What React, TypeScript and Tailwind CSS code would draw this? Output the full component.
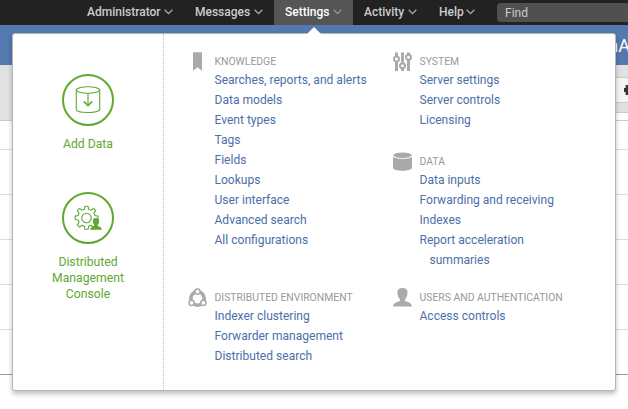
import type { ReactNode } from "react";

const navItems = [
  { label: "Administrator", width: "w-[108px]" },
  { label: "Messages", width: "w-[90px]" },
  { label: "Settings", width: "w-[79px]", active: true },
  { label: "Activity", width: "w-[75px]" },
  { label: "Help", width: "w-[58px]" },
];

function Chevron({ active }: { active?: boolean }) {
  return (
    <svg width="9" height="6" viewBox="0 0 9 6" fill="none" className={active ? "text-[#999]" : "text-[#aaa]"}>
      <path d="M0.7 0.8 4.5 4.6 8.3 0.8" stroke="currentColor" strokeWidth="1.3" />
    </svg>
  );
}

function TopBar() {
  return (
    <nav className="flex h-[25px] items-stretch bg-[#222] pl-[76px] text-[12px] font-medium text-[#ccc]">
      {navItems.map((item) => (
        <div
          key={item.label}
          className={`flex shrink-0 items-center justify-between px-[11px] pb-px ${item.width} ${
            item.active ? "bg-[#555] text-white" : ""
          }`}
        >
          <span>{item.label}</span>
          <Chevron active={item.active} />
        </div>
      ))}
      <div className="mt-[3px] ml-[11px] flex h-[19px] flex-1 items-center rounded-l-[4px] bg-[#505050] pl-2 font-normal">
        Find
      </div>
    </nav>
  );
}

function Page() {
  return (
    <main>
      <div className="flex h-10 items-center justify-end bg-[#5479af] text-[18px] whitespace-nowrap text-white">
        <span className="-mr-[2px] pt-px">nA</span>
      </div>
      <div className="flex h-14 flex-col items-end border-b border-[#ccc] bg-[#e1e1e1] pt-3">
        <div className="flex h-[27px] w-[30px] items-center justify-end overflow-hidden border-y border-[#ccc] bg-[#f5f5f5]">
          <svg width="4" height="12" viewBox="0 0 4 12">
            <path d="M0 4h1.6V1H4v10H1.6V8H0z" fill="#333" />
          </svg>
        </div>
        <div className="mt-[9px] h-2 w-[30px] border-t border-[#ccc] bg-white" />
      </div>
      <div className="h-[29px] border-b border-[#ddd]" />
      <div className="h-[45px] border-b border-[#ddd]" />
      <div className="h-[45px] border-b border-[#ddd]" />
      <div className="h-[45px] border-b border-[#ddd]" />
      <div className="h-[45px] border-b border-[#ddd]" />
      <div className="h-[45px] border-b border-[#999]" />
    </main>
  );
}

function Shortcut({ icon, children }: { icon: ReactNode; children: ReactNode }) {
  return (
    <div className="flex flex-col items-center text-center text-[12.2px] leading-4 text-[#5fa832]">
      <div className="mb-[10px] flex size-[52px] items-center justify-center rounded-full border-2 border-[#5fa832]">
        {icon}
      </div>
      {children}
    </div>
  );
}

function AddDataIcon() {
  return (
    <svg width="26" height="28" viewBox="0 0 26 28" fill="none" stroke="currentColor" strokeWidth="1.1">
      <ellipse cx="13" cy="4" rx="11.7" ry="3.3" />
      <path d="M1.3 4v19.2c0 4.4 23.4 4.4 23.4 0V4M13 7.4v12.2" />
      <path d="m8.8 15.4 4.2 4.2 4.2-4.2" strokeWidth="1.5" />
    </svg>
  );
}

function ConsoleIcon() {
  return (
    <svg width="28" height="26" viewBox="0 0 28 26" fill="none" stroke="currentColor" strokeWidth="1.1">
      <path
        d="M10.9 1.3h3.2l.5 2.9q1.3.3 2.4 1l2.5-1.8 2.2 2.2-1.8 2.6q.7 1.1 1 2.3l3 .6v3.4l-3 .5q-.3 1.2-1 2.3l1.8 2.6-2.2 2.2L17 20.3q-1.1.7-2.4 1l-.5 3h-3.2l-.5-3q-1.3-.3-2.4-1l-2.5 1.8-2.2-2.2 1.8-2.6q-.7-1.1-1-2.3l-3-.5v-3.4l3-.6q.3-1.2 1-2.3L3.3 5.6 5.5 3.4 8 5.2q1.1-.7 2.4-1z"
        strokeLinejoin="round"
      />
      <circle cx="12.5" cy="13" r="4.7" />
      <path
        d="M22 13.1c2.2 0 3.3 1.2 3.1 3.2-.1 1.7-.6 2.8-1.4 3.5v1.1c2.1.7 4 1.1 4.2 3.8H16.1c.2-2.7 2.1-3.1 4.2-3.8v-1.1c-.8-.7-1.3-1.8-1.4-3.5-.2-2 .9-3.2 3.1-3.2z"
        fill="currentColor"
        stroke="none"
      />
    </svg>
  );
}

function BookmarkIcon() {
  return (
    <svg width="19" height="20" viewBox="0 0 19 20" fill="#aaa">
      <path d="M5 0.3h9v18.5L9.5 15.3 5 18.8z" />
    </svg>
  );
}

function SlidersIcon() {
  return (
    <svg width="19" height="20" viewBox="0 0 19 20" fill="none" stroke="#aaa" strokeWidth="3">
      <path d="M3.5 0.5v4M3.5 10V19M9.5 0.5v10M9.5 16.5v2.5M15.5 0.5v2M15.5 8V19" />
      <g strokeWidth="2">
        <circle cx="3.5" cy="7" r="2.5" />
        <circle cx="9.5" cy="13.7" r="2.5" />
        <circle cx="15.5" cy="5.2" r="2.5" />
      </g>
    </svg>
  );
}

function DatabaseIcon() {
  return (
    <svg width="19" height="20" viewBox="0 0 19 20" fill="#aaa">
      <path d="M0 4.8c2.6 2.7 16.4 2.7 19 0v10.8c0 4.4-19 4.4-19 0z" />
      <ellipse cx="9.5" cy="3.3" rx="9.2" ry="2.8" />
    </svg>
  );
}

function ClusterIcon() {
  return (
    <svg width="19" height="20" viewBox="0 0 19 20" fill="none" stroke="#aaa">
      <circle cx="9.5" cy="10.5" r="6.7" strokeWidth="3.6" />
      <g fill="white" strokeWidth="1.5">
        <circle cx="9.5" cy="3.6" r="2.6" />
        <circle cx="3.6" cy="14.8" r="2.6" />
        <circle cx="15.4" cy="14.8" r="2.6" />
      </g>
    </svg>
  );
}

function UserIcon() {
  return (
    <svg width="19" height="20" viewBox="0 0 19 20" fill="#aaa">
      <path d="M9.5 0C13.2 0 15 2.1 14.5 5.5c-.2 2.4-1 4.600-2.600 6v1.300c.5 1 6.700 1.200 7.100 5.700H0c.4-4.500 6.600-4.700 7.100-5.700v-1.300c-1.600-1.400-2.400-3.600-2.600-6C4 2.100 5.800 0 9.500 0z" />
    </svg>
  );
}

function MenuSection({ title, icon, links }: { title: string; icon: ReactNode; links: string[] }) {
  return (
    <section className="flex gap-[7.5px] whitespace-nowrap">
      <div className="shrink-0">{icon}</div>
      <div>
        <h2 className="pt-[2px] text-[10.4px] leading-4 text-[#999]">{title}</h2>
        <ul className="text-[12.05px] leading-5 text-[#4c6fa8]">
          {links.map((link) => (
            <li key={link}>{link}</li>
          ))}
          {title === "DATA" && <li className="pl-[10px]">summaries</li>}
        </ul>
      </div>
    </section>
  );
}

function SettingsMenu() {
  return (
    <div className="absolute top-[33px] left-[12px] flex h-[358px] w-[604px] rounded-[3px] border border-[#b5b5b5] bg-white shadow-[0_3px_5px_rgba(0,0,0,0.25)]">
      <svg className="absolute -top-[8px] left-[294px]" width="14" height="8" viewBox="0 0 14 8">
        <path d="M0 8 7 1l7 7z" fill="white" />
      </svg>
      <aside className="flex w-[151px] shrink-0 flex-col gap-10 border-r border-dotted border-[#bbb] pt-10">
        <Shortcut icon={<AddDataIcon />}>Add Data</Shortcut>
        <Shortcut icon={<ConsoleIcon />}>
          Distributed
          <br />
          Management
          <br />
          Console
        </Shortcut>
      </aside>
      <div className="grid flex-1 grid-cols-[205px_1fr] grid-rows-[236px_1fr] pt-[18px] pl-[24px]">
        <MenuSection
          title="KNOWLEDGE"
          icon={<BookmarkIcon />}
          links={[
            "Searches, reports, and alerts",
            "Data models",
            "Event types",
            "Tags",
            "Fields",
            "Lookups",
            "User interface",
            "Advanced search",
            "All configurations",
          ]}
        />
        <div className="flex flex-col gap-[22px]">
          <MenuSection
            title="SYSTEM"
            icon={<SlidersIcon />}
            links={["Server settings", "Server controls", "Licensing"]}
          />
          <MenuSection
            title="DATA"
            icon={<DatabaseIcon />}
            links={["Data inputs", "Forwarding and receiving", "Indexes", "Report acceleration"]}
          />
        </div>
        <MenuSection
          title="DISTRIBUTED ENVIRONMENT"
          icon={<ClusterIcon />}
          links={["Indexer clustering", "Forwarder management", "Distributed search"]}
        />
        <MenuSection title="USERS AND AUTHENTICATION" icon={<UserIcon />} links={["Access controls"]} />
      </div>
    </div>
  );
}

export default function App() {
  return (
    <div className="relative h-[409px] w-[628px] overflow-hidden bg-white font-[Roboto,sans-serif]">
      <TopBar />
      <Page />
      <SettingsMenu />
    </div>
  );
}
